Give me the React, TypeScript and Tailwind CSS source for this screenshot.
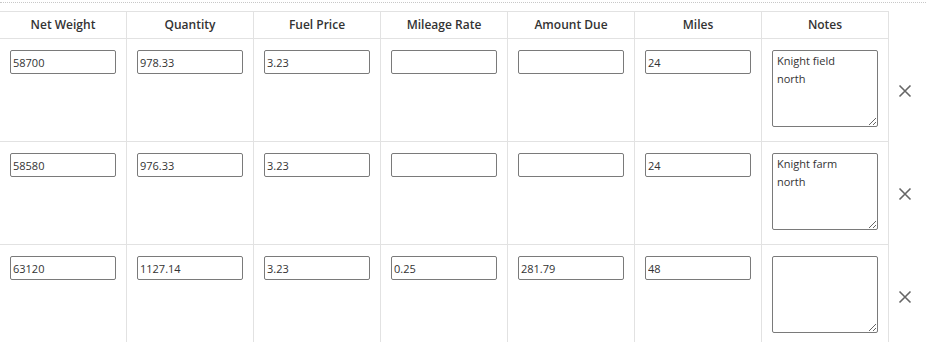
const headers = ['Net Weight', 'Quantity', 'Fuel Price', 'Mileage Rate', 'Amount Due', 'Miles', 'Notes'];

interface Entry {
  netWeight: string;
  quantity: string;
  fuelPrice: string;
  mileageRate: string;
  amountDue: string;
  miles: string;
  notes: string;
}

const rows: Entry[] = [
  { netWeight: '58700', quantity: '978.33', fuelPrice: '3.23', mileageRate: '', amountDue: '', miles: '24', notes: 'Knight field north' },
  { netWeight: '58580', quantity: '976.33', fuelPrice: '3.23', mileageRate: '', amountDue: '', miles: '24', notes: 'Knight farm north' },
  { netWeight: '63120', quantity: '1127.14', fuelPrice: '3.23', mileageRate: '0.25', amountDue: '281.79', miles: '48', notes: '' },
];

function Field({ value }: { value: string }) {
  return (
    <input
      defaultValue={value}
      className="block w-[106px] h-[24px] border border-[#7a7a7a] rounded-[2px] px-[2px] text-[11px] text-[#333] bg-white outline-none"
    />
  );
}

function RemoveIcon() {
  return (
    <svg width="14" height="14" viewBox="0 0 14 14" className="text-[#666]">
      <path d="M1.5 1.5 L12.5 12.5 M12.5 1.5 L1.5 12.5" stroke="currentColor" strokeWidth="1.6" fill="none" />
    </svg>
  );
}

function EntryRow({ entry, last }: { entry: Entry; last: boolean }) {
  const values = [entry.netWeight, entry.quantity, entry.fuelPrice, entry.mileageRate, entry.amountDue, entry.miles];
  return (
    <div className="flex">
      <div className={`flex ${last ? 'h-[110px]' : 'h-[103px] border-b border-[#e2e2e2]'}`}>
        {values.map((v, i) => (
          <div key={i} className="w-[127px] border-r border-[#e2e2e2] pl-[10px] pt-[11px]">
            <Field value={v} />
          </div>
        ))}
        <div className="w-[127px] border-r border-[#e2e2e2] pl-[10px] pt-[11px]">
          <textarea
            defaultValue={entry.notes}
            className="block w-[106px] h-[77px] border border-[#7a7a7a] rounded-[2px] pl-[4px] pr-[22px] py-[1px] text-[11px] leading-[18px] text-[#333] bg-white outline-none"
          />
        </div>
      </div>
      <div className="w-[32px] flex items-center justify-center h-[103px]">
        <RemoveIcon />
      </div>
    </div>
  );
}

export default function App() {
  return (
    <div className="w-[930px] h-[342px] overflow-hidden bg-white font-['Open_Sans',sans-serif]">
      <div className="mt-[2px] mr-[4px] border-t border-dotted border-[#c8c8c8]" />
      <div className="mt-[8px] -ml-px">
        <div className="flex">
          <div className="flex border-t border-l border-b border-[#e2e2e2] h-[28px]">
            {headers.map((h) => (
              <div
                key={h}
                className="w-[127px] border-r border-[#e2e2e2] flex items-center justify-center text-[12px] font-semibold text-[#333]"
              >
                {h}
              </div>
            ))}
          </div>
        </div>
        <div className="border-l border-[#e2e2e2] w-fit">
          {rows.map((r, i) => (
            <EntryRow key={i} entry={r} last={i === rows.length - 1} />
          ))}
        </div>
      </div>
    </div>
  );
}
